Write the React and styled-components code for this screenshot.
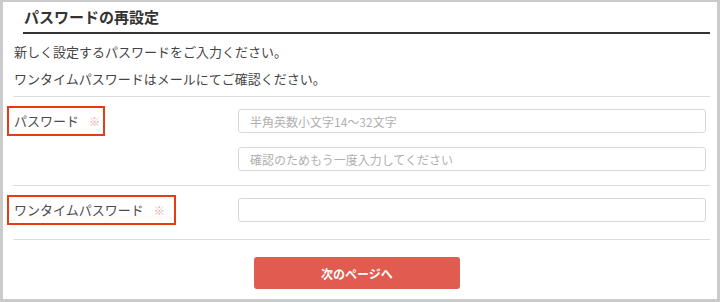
import React from 'react';
import styled, { createGlobalStyle } from 'styled-components';

/************************************* jsx *************************************/

const GlobalStyle = createGlobalStyle`
	html, body {
		margin: 0;
		padding: 0;
		background: #ffffff;
	}
	* {
		box-sizing: border-box;
	}
	body {
		font-family: 'Noto Sans CJK JP', 'Noto Sans', sans-serif;
		color: #444444;
	}
`;

const App = () => {
	return (
		<>
			<GlobalStyle />
			<Frame>
				<Header>
					<Title>パスワードの再設定</Title>
				</Header>
				<Intro>
					<p>新しく設定するパスワードをご入力ください。</p>
					<p>ワンタイムパスワードはメールにてご確認ください。</p>
				</Intro>
				<Section>
					<Row>
						<LabelBox $width={98}>
							パスワード
							<Required>※</Required>
						</LabelBox>
						<Fields>
							<Input type="password" placeholder="半角英数小文字14〜32文字" />
							<Input type="password" placeholder="確認のためもう一度入力してください" />
						</Fields>
					</Row>
					<Row>
						<LabelBox $width={169}>
							ワンタイムパスワード
							<Required>※</Required>
						</LabelBox>
						<Fields>
							<Input type="text" />
						</Fields>
					</Row>
				</Section>
				<Actions>
					<NextButton type="button">次のページへ</NextButton>
				</Actions>
			</Frame>
		</>
	);
};

export default App;

/******************************** styled-components ********************************/

const Frame = styled.div`
	width: 720px;
	height: 302px;
	background: #ffffff;
	border: 3px solid #cbcbcb;
	border-top-width: 2px;
	overflow: hidden;
`;

const Header = styled.div`
	margin: 0 7px 0 20px;
	height: 32px;
	border-bottom: 2px solid #333333;
`;

const Title = styled.h2`
	margin: 0;
	padding-left: 1px;
	font-size: 15px;
	line-height: 30px;
	font-weight: 700;
	color: #333333;
`;

const Intro = styled.div`
	margin: 4px 7px 4px 10px;
	padding-left: 1px;

	p {
		margin: 0;
		font-size: 13px;
		line-height: 27px;
		color: #444444;
	}
`;

const Section = styled.div`
	margin: 0 7px 0 10px;
	border-top: 1px solid #dcdcdc;
`;

const Row = styled.div`
	display: grid;
	grid-template-columns: 225px 1fr;
	align-items: start;
	padding: 12px 4px 14px 0;
	border-bottom: 1px solid #dcdcdc;
`;

const LabelBox = styled.div`
	justify-self: start;
	display: flex;
	align-items: center;
	width: ${({ $width }) => $width}px;
	height: 30px;
	margin: -3px 0 0 -6px;
	padding: 0 0 2px 5px;
	border: 2px solid #e63c12;
	font-size: 13px;
	color: #4a4a4a;
	white-space: nowrap;
`;

const Required = styled.span`
	margin: 2px 0 0 10px;
	font-size: 11px;
	color: #f0a5a5;
`;

const Fields = styled.div`
	display: flex;
	flex-direction: column;
	gap: 14px;
`;

const Input = styled.input`
	width: 100%;
	height: 24px;
	padding: 0 11px;
	border: 1px solid #d6d9da;
	border-radius: 3px;
	font-family: 'Noto Sans CJK JP', 'Noto Sans', sans-serif;
	font-size: 12px;
	color: #444444;
	background: #ffffff;
	outline: none;

	&::placeholder {
		color: #b0b0b0;
	}
`;

const Actions = styled.div`
	display: flex;
	justify-content: center;
	padding: 17px 6px 0 0;
`;

const NextButton = styled.button`
	width: 206px;
	height: 32px;
	border: none;
	border-radius: 3px;
	background: #e05c50;
	color: #ffffff;
	font-family: 'Noto Sans CJK JP', 'Noto Sans', sans-serif;
	font-size: 12px;
	font-weight: 700;
	cursor: pointer;
`;
